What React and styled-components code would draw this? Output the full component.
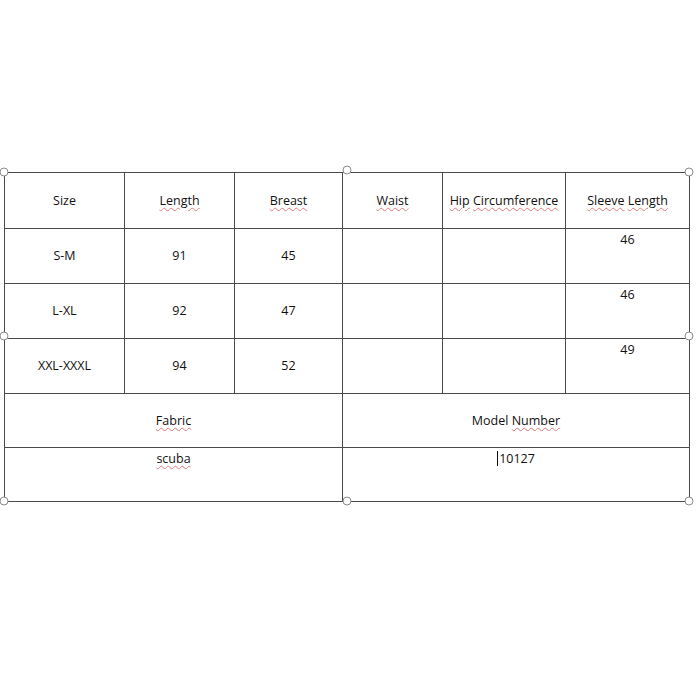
import React from 'react';
import styled, { createGlobalStyle } from 'styled-components';

const GlobalStyle = createGlobalStyle`
    html, body {
        margin: 0;
        padding: 0;
        background: #ffffff;
    }
    body {
        font-family: "Open Sans", "Noto Sans", "Liberation Sans", sans-serif;
        color: #111111;
    }
`;

const Page = styled.div`
    width: 700px;
    height: 700px;
    padding-top: 172px;
    padding-left: 4px;
    box-sizing: border-box;
`;

const Frame = styled.div`
    position: relative;
    width: 685px;
`;

const Table = styled.table`
    width: 685px;
    border-collapse: collapse;
    table-layout: fixed;
    border: 1px solid #8a8a8a;
`;

const Cell = styled.td`
    height: ${p => p.$h || 55}px;
    padding: ${p => (p.$top ? '2px 4px 0' : '0 4px')};
    border: 1px solid #4a4a4a;
    text-align: center;
    vertical-align: ${p => (p.$top ? 'top' : 'middle')};
    font-size: 12.5px;
    line-height: 18px;
    box-sizing: border-box;
`;

const Misspelled = styled.span`
    text-decoration: underline wavy #e27a7a;
    text-decoration-thickness: 1px;
    text-underline-offset: 2px;
`;

const Caret = styled.span`
    display: inline-block;
    width: 0;
    height: 15px;
    border-left: 1px solid #111;
    vertical-align: -3px;
    margin-right: 1px;
`;

const Handle = styled.span`
    position: absolute;
    width: 7px;
    height: 7px;
    border: 1px solid #8c8c8c;
    border-radius: 50%;
    background: #ffffff;
    transform: translate(-50%, -50%);
    left: ${p => p.$x}px;
    top: ${p => p.$y}px;
`;

const columns = [120, 110, 108, 100, 123, 124];

const sizes = [
    { size: 'S-M', length: '91', breast: '45', sleeve: '46' },
    { size: 'L-XL', length: '92', breast: '47', sleeve: '46' },
    { size: 'XXL-XXXL', length: '94', breast: '52', sleeve: '49' }
];

const handles = [
    [0, 0], [343, -2], [685, 0],
    [0, 164], [685, 164],
    [0, 329], [343, 329], [685, 329]
];

const App = () => (
    <Page>
        <GlobalStyle />
        <Frame>
            <Table>
                <colgroup>
                    {columns.map((w, i) => <col key={i} style={{ width: w }} />)}
                </colgroup>
                <tbody>
                    <tr>
                        <Cell $h={56}>Size</Cell>
                        <Cell $h={56}><Misspelled>Length</Misspelled></Cell>
                        <Cell $h={56}><Misspelled>Breast</Misspelled></Cell>
                        <Cell $h={56}><Misspelled>Waist</Misspelled></Cell>
                        <Cell $h={56}><Misspelled>Hip</Misspelled> <Misspelled>Circumference</Misspelled></Cell>
                        <Cell $h={56}><Misspelled>Sleeve</Misspelled> <Misspelled>Length</Misspelled></Cell>
                    </tr>
                    {sizes.map(row => (
                        <tr key={row.size}>
                            <Cell>{row.size}</Cell>
                            <Cell>{row.length}</Cell>
                            <Cell>{row.breast}</Cell>
                            <Cell />
                            <Cell />
                            <Cell $top>{row.sleeve}</Cell>
                        </tr>
                    ))}
                    <tr>
                        <Cell $h={54} colSpan={3}><Misspelled>Fabric</Misspelled></Cell>
                        <Cell $h={54} colSpan={3}>Model <Misspelled>Number</Misspelled></Cell>
                    </tr>
                    <tr>
                        <Cell $h={54} colSpan={3} $top><Misspelled>scuba</Misspelled></Cell>
                        <Cell $h={54} colSpan={3} $top><Caret />10127</Cell>
                    </tr>
                </tbody>
            </Table>
            {handles.map(([x, y], i) => <Handle key={i} $x={x} $y={y} />)}
        </Frame>
    </Page>
);

export default App;
